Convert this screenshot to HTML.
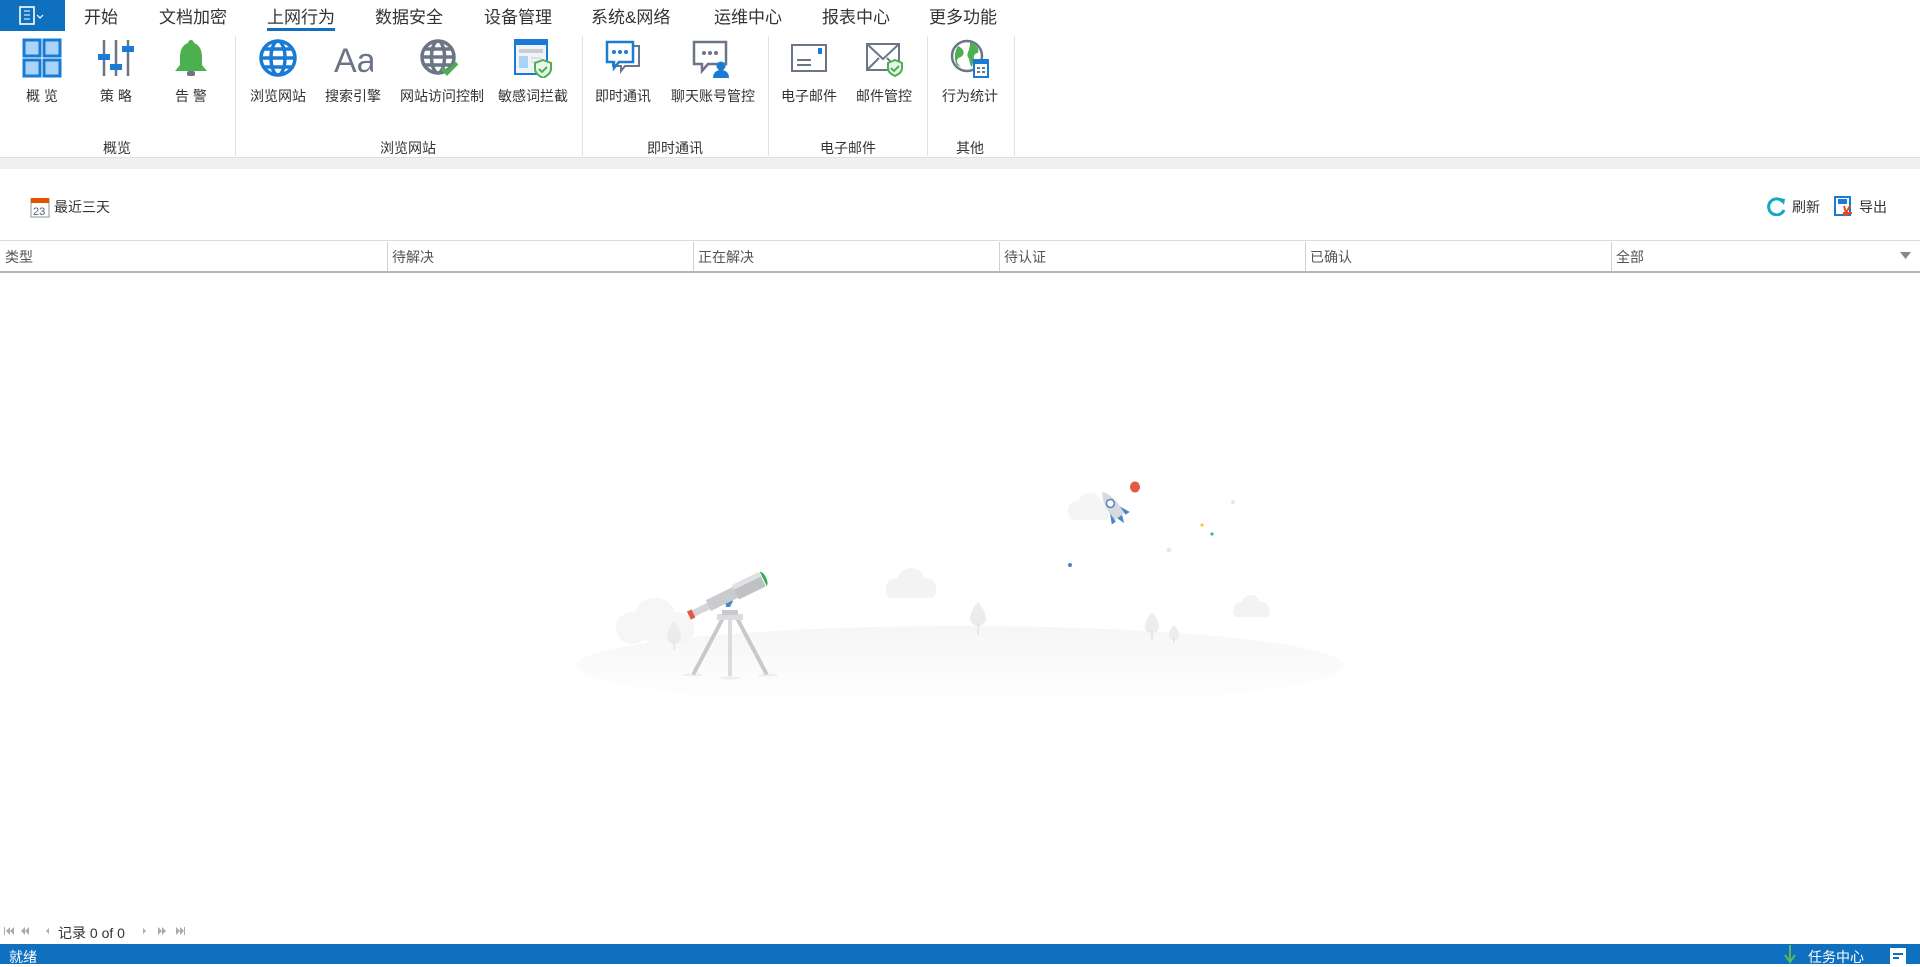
<!DOCTYPE html>
<html><head><meta charset="utf-8"><style>
*{margin:0;padding:0;box-sizing:border-box}
body{width:1920px;height:964px;position:relative;overflow:hidden;background:#fff;font-family:"Liberation Sans","Noto Sans CJK SC",sans-serif;color:#333}
.abs{position:absolute}
.tab{position:absolute;top:3px;font-size:17px;color:#333;white-space:nowrap}
.btn{position:absolute;top:38px;width:80px;margin-left:-40px;text-align:center}
.btn svg{display:block;margin:0 auto}
.btn span{display:block;font-size:14px;margin-top:8px;white-space:nowrap;color:#333}
.grp{position:absolute;top:138px;font-size:14px;color:#333;transform:translateX(-50%)}
.sep{position:absolute;top:36px;width:1px;height:120px;background:#e2e2e2}
.th{position:absolute;top:247px;font-size:14px;color:#555}
.cs{position:absolute;top:242px;width:1px;height:29px;background:#d0d0d0}
</style></head><body>
<div class="abs" style="left:0;top:0;width:65px;height:31px;background:#1070c0"></div>
<svg class="abs" style="left:18px;top:6px" width="30" height="20"><rect x="2" y="1" width="14" height="17" fill="none" stroke="#fff" stroke-width="1.6"/><line x1="6" y1="5" x2="12" y2="5" stroke="#fff"/><line x1="6" y1="9" x2="12" y2="9" stroke="#fff"/><line x1="6" y1="13" x2="12" y2="13" stroke="#fff"/><path d="M19 9l3 3 3-3" fill="none" stroke="#fff" stroke-width="1.2"/></svg>
<div class="tab" style="left:84px">开始</div>
<div class="tab" style="left:159px">文档加密</div>
<div class="tab" style="left:267px">上网行为</div>
<div class="abs" style="left:267px;top:28px;width:68px;height:3px;background:#1070c0"></div>
<div class="tab" style="left:375px">数据安全</div>
<div class="tab" style="left:484px">设备管理</div>
<div class="tab" style="left:591px">系统&amp;网络</div>
<div class="tab" style="left:714px">运维中心</div>
<div class="tab" style="left:822px">报表中心</div>
<div class="tab" style="left:929px">更多功能</div>

<div class="btn" style="left:42px"><svg width="40" height="40"><g fill="#a9d3f7" stroke="#1a7bd6" stroke-width="3"><rect x="2" y="2" width="16" height="16"/><rect x="22" y="2" width="16" height="16"/><rect x="2" y="22" width="16" height="16"/><rect x="22" y="22" width="16" height="16"/></g></svg><span>概 览</span></div>
<div class="btn" style="left:116px"><svg width="40" height="40"><g stroke="#6c7585" stroke-width="2.5"><line x1="8" y1="2" x2="8" y2="38"/><line x1="20" y1="2" x2="20" y2="38"/><line x1="32" y1="2" x2="32" y2="38"/></g><g fill="#1a7bd6"><rect x="2" y="16" width="12" height="6"/><rect x="14" y="26" width="12" height="6"/><rect x="26" y="8" width="12" height="6"/></g></svg><span>策 略</span></div>
<div class="btn" style="left:191px"><svg width="40" height="40"><path d="M20 2c-2 0-3 2-3 3-6 2-8 8-8 14v8l-5 6h32l-5-6v-8c0-6-2-12-8-14 0-1-1-3-3-3z" fill="#4caf50"/><rect x="16" y="33" width="8" height="5" rx="2" fill="#6c7585"/></svg><span>告 警</span></div>
<div class="sep" style="left:235px"></div>
<div class="btn" style="left:278px"><svg width="40" height="40"><g fill="none" stroke="#1a7bd6" stroke-width="3.5"><circle cx="20" cy="20" r="17"/><ellipse cx="20" cy="20" rx="7" ry="17"/><line x1="3" y1="20" x2="37" y2="20"/><line x1="6" y1="11" x2="34" y2="11"/><line x1="6" y1="29" x2="34" y2="29"/></g></svg><span>浏览网站</span></div>
<div class="btn" style="left:353px"><svg width="40" height="40"><text x="1" y="34" font-family="Liberation Sans" font-size="34" fill="#6c7585">Aa</text></svg><span>搜索引擎</span></div>
<div class="btn" style="left:440px"><svg width="40" height="40"><g fill="none" stroke="#6c7585" stroke-width="3.5"><circle cx="18" cy="19" r="16"/><ellipse cx="18" cy="19" rx="6.5" ry="16"/><line x1="2" y1="19" x2="34" y2="19"/><line x1="5" y1="11" x2="31" y2="11"/><line x1="5" y1="27" x2="31" y2="27"/></g><path d="M22 30l5 5 10-10" fill="none" stroke="#4caf50" stroke-width="4"/></svg><span>网站访问控制</span></div>
<div class="btn" style="left:533px"><svg width="40" height="40"><rect x="2" y="2" width="32" height="34" fill="#f0f4f8" stroke="#1a7bd6" stroke-width="2"/><rect x="2" y="2" width="32" height="5" fill="#1a7bd6"/><rect x="6" y="11" width="24" height="4" fill="#c9ccd2"/><rect x="6" y="18" width="9" height="12" fill="#a9d3f7"/><line x1="18" y1="20" x2="28" y2="20" stroke="#c9ccd2"/><line x1="18" y1="24" x2="28" y2="24" stroke="#c9ccd2"/><path d="M30 22l8 3v6c0 4-4 7-8 9-4-2-8-5-8-9v-6z" fill="#e8f5e9" stroke="#4caf50" stroke-width="2"/><path d="M26 31l3 3 5-5" fill="none" stroke="#4caf50" stroke-width="2"/></svg><span>敏感词拦截</span></div>
<div class="sep" style="left:582px"></div>
<div class="btn" style="left:623px"><svg width="40" height="40"><path d="M10 8h26v20H22l-4 5v-5h-8z" fill="#fff" stroke="#6c7585" stroke-width="2"/><path d="M4 4h26v20H16l-5 6v-6H4z" fill="#fff" stroke="#1a7bd6" stroke-width="2.5"/><g fill="#1a7bd6"><circle cx="11" cy="14" r="2"/><circle cx="17" cy="14" r="2"/><circle cx="23" cy="14" r="2"/></g></svg><span>即时通讯</span></div>
<div class="btn" style="left:711px"><svg width="40" height="40"><path d="M3 4h32v22H17l-6 7v-7H3z" fill="#fff" stroke="#6c7585" stroke-width="2.5"/><g fill="#6c7585"><circle cx="13" cy="15" r="2"/><circle cx="19" cy="15" r="2"/><circle cx="25" cy="15" r="2"/></g><circle cx="30" cy="28" r="4.5" fill="#1a7bd6"/><path d="M22 40c0-6 4-8 8-8s8 2 8 8z" fill="#1a7bd6"/></svg><span>聊天账号管控</span></div>
<div class="sep" style="left:768px"></div>
<div class="btn" style="left:809px"><svg width="40" height="40"><rect x="3" y="7" width="34" height="26" fill="#fff" stroke="#6c7585" stroke-width="2"/><rect x="29" y="10" width="4" height="6" fill="#1a7bd6"/><line x1="8" y1="22" x2="22" y2="22" stroke="#6c7585" stroke-width="2"/><line x1="8" y1="27" x2="22" y2="27" stroke="#6c7585" stroke-width="2"/></svg><span>电子邮件</span></div>
<div class="btn" style="left:884px"><svg width="40" height="40"><rect x="3" y="6" width="32" height="26" fill="#fff" stroke="#6c7585" stroke-width="2"/><path d="M3 6l16 15 16-15M3 32l12-12M35 32l-12-12" fill="none" stroke="#6c7585" stroke-width="2"/><path d="M31 22l7 3v5c0 4-3 6-7 8-4-2-7-4-7-8v-5z" fill="#e8f5e9" stroke="#4caf50" stroke-width="2"/><path d="M27 30l3 3 5-5" fill="none" stroke="#4caf50" stroke-width="2"/></svg><span>邮件管控</span></div>
<div class="sep" style="left:927px"></div>
<div class="btn" style="left:970px"><svg width="40" height="40"><circle cx="17" cy="18" r="15" fill="#fff" stroke="#6c7585" stroke-width="2.5"/><path d="M8 8c4 2 7 5 5 9-2 3-6 2-6 6 0 2 2 4 4 6l-4-2c-3-5-3-13 1-19zM20 4c4 2 10 5 8 11-3 0-5 3-4 6l-2 8c-3-3-2-7-4-10s2-6 2-15z" fill="#4caf50"/><rect x="24" y="22" width="14" height="17" fill="#fff" stroke="#1a7bd6" stroke-width="2"/><rect x="24" y="22" width="14" height="4" fill="#1a7bd6"/><g fill="#6c7585"><rect x="27" y="29" width="3" height="2"/><rect x="32" y="29" width="3" height="2"/><rect x="27" y="33" width="3" height="2"/><rect x="32" y="33" width="3" height="2"/></g></svg><span>行为统计</span></div>
<div class="sep" style="left:1014px"></div>
<div class="grp" style="left:117px">概览</div>
<div class="grp" style="left:408px">浏览网站</div>
<div class="grp" style="left:675px">即时通讯</div>
<div class="grp" style="left:848px">电子邮件</div>
<div class="grp" style="left:970px">其他</div>
<div class="abs" style="left:0;top:157px;width:1920px;height:12px;background:#f0f0f0;border-top:1px solid #e0e0e0"></div>

<svg class="abs" style="left:30px;top:196px" width="20" height="22"><rect x="1" y="3" width="18" height="18" fill="#fff" stroke="#8a96a8"/><rect x="1" y="2" width="18" height="5" fill="#e65100"/><text x="3" y="19" font-size="11" font-family="Liberation Sans" fill="#56627a">23</text></svg>
<div class="abs" style="left:54px;top:197px;font-size:14px">最近三天</div>
<svg class="abs" style="left:1767px;top:196px" width="20" height="20"><path d="M16 6A8 8 0 1 0 17 14" fill="none" stroke="#14a7c4" stroke-width="3"/><path d="M12 2l6 1-1 6z" fill="#14a7c4"/></svg>
<div class="abs" style="left:1792px;top:197px;font-size:14px">刷新</div>
<svg class="abs" style="left:1834px;top:196px" width="20" height="22"><rect x="1" y="1" width="15" height="18" fill="#fff" stroke="#1a7bd6" stroke-width="2"/><rect x="4" y="3" width="9" height="5" fill="#1a7bd6"/><path d="M10 10l3 10M16 10l-6 10M9 17h9" stroke="#e64a19" stroke-width="2" fill="none"/></svg>
<div class="abs" style="left:1859px;top:197px;font-size:14px">导出</div>

<div class="abs" style="left:0;top:240px;width:1920px;height:1px;background:#dcdcdc"></div>
<div class="abs" style="left:0;top:271px;width:1920px;height:2px;background:#b5b5b5"></div>
<div class="th" style="left:5px">类型</div>
<div class="cs" style="left:387px"></div><div class="th" style="left:392px">待解决</div>
<div class="cs" style="left:693px"></div><div class="th" style="left:698px">正在解决</div>
<div class="cs" style="left:999px"></div><div class="th" style="left:1004px">待认证</div>
<div class="cs" style="left:1305px"></div><div class="th" style="left:1310px">已确认</div>
<div class="cs" style="left:1611px"></div><div class="th" style="left:1616px">全部</div>
<svg class="abs" style="left:1900px;top:252px" width="12" height="8"><path d="M0 0h11l-5.5 7z" fill="#888"/></svg>

<svg class="abs" style="left:570px;top:470px" width="780" height="240">
<defs><linearGradient id="g" x1="0" y1="0" x2="0" y2="1"><stop offset="0" stop-color="#f6f6f6"/><stop offset="1" stop-color="#fff"/></linearGradient></defs>
<ellipse cx="390" cy="196" rx="384" ry="40" fill="url(#g)"/>
<g fill="#f6f6f6"><circle cx="85" cy="150" r="22"/><circle cx="62" cy="158" r="16"/><circle cx="108" cy="158" r="16"/><rect x="48" y="152" width="76" height="18" rx="9"/></g>
<g fill="#f3f3f3"><circle cx="341" cy="112" r="14"/><circle cx="326" cy="118" r="10"/><circle cx="356" cy="118" r="10"/><rect x="316" y="116" width="50" height="12" rx="6"/></g>
<g fill="#f3f3f3"><circle cx="681" cy="134" r="9"/><circle cx="671" cy="139" r="7"/><circle cx="692" cy="139" r="7"/><rect x="663" y="138" width="37" height="9" rx="4"/></g>
<g fill="#f5f5f5"><circle cx="520" cy="35" r="12"/><circle cx="507" cy="40" r="9"/><circle cx="532" cy="40" r="9"/><rect x="498" y="38" width="42" height="12" rx="6"/></g>
<g fill="#ececec"><path d="M104 151c-5 5-7 12-7 16 0 4 3 7 7 7s7-3 7-7c0-4-2-11-7-16z"/><path d="M408 132c-5 5-8 13-8 17 0 4 4 7 8 7s8-3 8-7c0-4-3-12-8-17z"/><path d="M582 143c-5 4-7 11-7 14 0 4 3 6 7 6s7-2 7-6c0-3-2-10-7-14z"/><path d="M604 155c-3 3-5 7-5 10 0 3 2 5 5 5s5-2 5-5c0-3-2-7-5-10z"/></g>
<g stroke="#e2e2e2" stroke-width="1.5"><line x1="104" y1="170" x2="104" y2="180"/><line x1="408" y1="152" x2="408" y2="165"/><line x1="582" y1="160" x2="582" y2="170"/><line x1="604" y1="167" x2="604" y2="173"/></g>
<g fill="#eee"><ellipse cx="122" cy="205" rx="10" ry="1.5"/><ellipse cx="160" cy="208" rx="10" ry="1.5"/><ellipse cx="198" cy="205" rx="10" ry="1.5"/></g>
<g stroke="#c7c9cc" stroke-width="4" stroke-linecap="round"><line x1="152" y1="150" x2="124" y2="203"/><line x1="168" y1="150" x2="196" y2="203"/></g>
<line x1="160" y1="148" x2="160" y2="206" stroke="#dadcdf" stroke-width="4"/>
<rect x="147" y="144" width="26" height="6" fill="#dadcdf"/>
<rect x="152" y="140" width="16" height="5" fill="#c7c9cc"/>
<path d="M155 128l4-3 4 6-3 6h-4z" fill="#4a86c8"/>
<g transform="rotate(-26 160 125)">
<rect x="118" y="122" width="20" height="7" fill="#d3d5d8"/>
<rect x="136" y="119" width="32" height="12" fill="#c9cbce"/>
<rect x="166" y="117" width="30" height="16" fill="#bfc1c5"/>
<rect x="166" y="117" width="30" height="5" fill="#dfe1e3"/>
<rect x="114" y="121" width="5" height="9" fill="#e05a45"/>
<path d="M197 117c4 2 4 14 0 16z" fill="#2fae4f"/>
</g>
<g transform="rotate(-35 545 40)">
<path d="M545 18c6 6 7 20 6 30h-12c-1-10 0-24 6-30z" fill="#d7dade"/>
<circle cx="545" cy="32" r="4" fill="#fff" stroke="#4a86c8" stroke-width="1.5"/>
<path d="M539 40l-5 10h5zM551 40l5 10h-5z" fill="#4a86c8"/>
<path d="M542 48h6l-3 8z" fill="#4a86c8"/>
</g>
<ellipse cx="565" cy="17" rx="5" ry="5.5" fill="#e05a45"/>
<circle cx="663" cy="32" r="2" fill="#e5e5e5"/>
<circle cx="632" cy="55" r="1.6" fill="#f3c846"/>
<circle cx="642" cy="64" r="1.6" fill="#3cc08a"/>
<circle cx="599" cy="80" r="2.5" fill="#e8e8e8"/>
<circle cx="500" cy="95" r="2" fill="#4a86c8"/>
</svg>

<svg class="abs" style="left:3px;top:926px" width="52" height="10"><g fill="#aaa"><rect x="1" y="1" width="1" height="8"/><path d="M7 1v8l-4-4zM11 1v8l-4-4z"/><path d="M22 1v8l-4-4zM26 1v8l-4-4z"/><path d="M46 2v6l-3-3z"/></g></svg>
<div class="abs" style="left:58px;top:923px;font-size:14px;color:#333">记录 0 of 0</div>
<svg class="abs" style="left:142px;top:926px" width="50" height="10"><g fill="#aaa"><path d="M1 2v6l3-3z"/><path d="M16 1v8l4-4zM20 1v8l4-4z"/><path d="M34 1v8l4-4zM38 1v8l4-4z"/><rect x="42" y="1" width="1" height="8"/></g></svg>

<div class="abs" style="left:0;top:944px;width:1920px;height:20px;background:#1070c0"></div>
<div class="abs" style="left:9px;top:947px;font-size:14px;color:#fff">就绪</div>
<svg class="abs" style="left:1784px;top:945px" width="12" height="19"><path d="M6 0v17M1 10l5 7 5-7" fill="none" stroke="#5cb85c" stroke-width="2"/></svg>
<div class="abs" style="left:1808px;top:947px;font-size:14px;color:#fff">任务中心</div>
<svg class="abs" style="left:1890px;top:948px" width="16" height="16"><rect x="0" y="0" width="16" height="16" fill="#fff"/><rect x="3" y="5" width="10" height="2" fill="#1070c0"/><rect x="3" y="9" width="6" height="2" fill="#1070c0"/></svg>
</body></html>
